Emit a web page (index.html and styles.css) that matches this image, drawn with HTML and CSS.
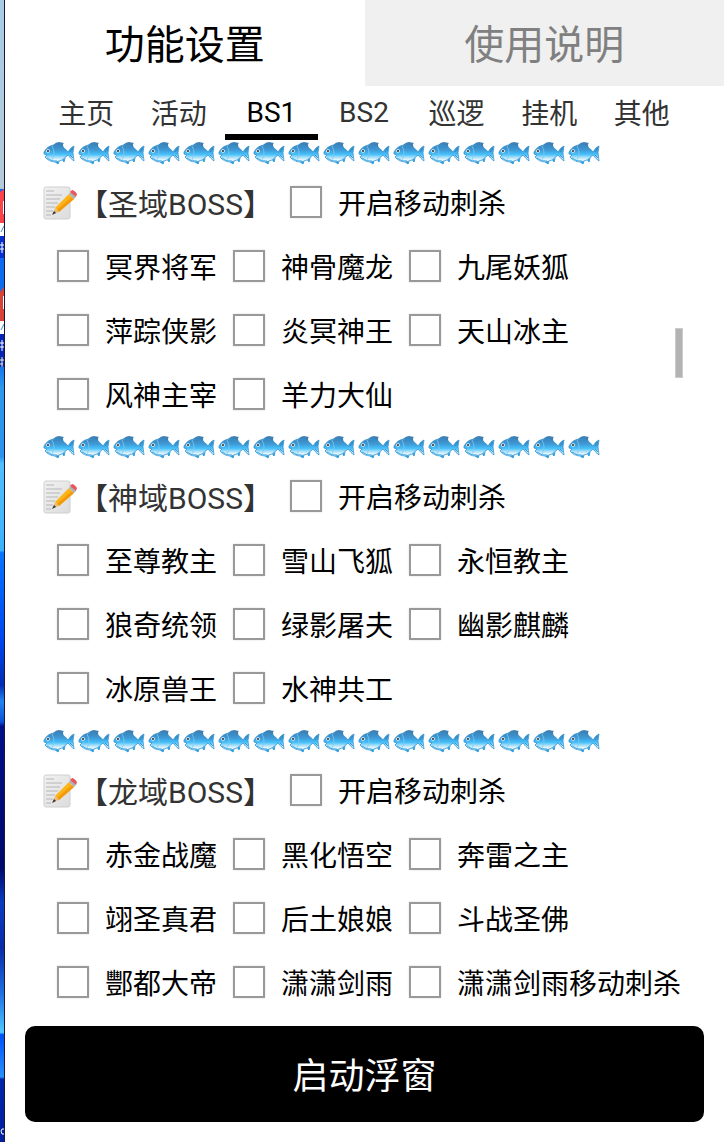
FILE: index.html
```
<!DOCTYPE html>
<html lang="zh-CN">
<head>
    <meta charset="UTF-8">
    <meta name="viewport" content="width=device-width, initial-scale=1.0">
    <title>功能设置</title>
    <link rel="stylesheet" href="styles.css">
</head>
<body>

<!-- shared icons -->
<svg class="defs" width="0" height="0" aria-hidden="true">
    <defs>
        <linearGradient id="fishBody" x1="0" y1="0" x2="0" y2="1">
            <stop offset="0" stop-color="#3b83bb"/>
            <stop offset="0.3" stop-color="#3f9bd6"/>
            <stop offset="0.55" stop-color="#45c0fb"/>
            <stop offset="0.72" stop-color="#a5def9"/>
            <stop offset="0.9" stop-color="#f2fafd"/>
        </linearGradient>
        <linearGradient id="paper" x1="0" y1="0" x2="1" y2="1">
            <stop offset="0" stop-color="#f2f2f2"/>
            <stop offset="1" stop-color="#dcdcdc"/>
        </linearGradient>
        <g id="fish">
            <path d="M10 5 Q13 2 16 2 L21 3 Q19 4 21 8 Z" fill="#3f80b5"/>
            <path d="M11 21 L15 24 L16 21 M19 19 L21 22 L22 18" fill="#2f9fe0" stroke="#2f9fe0"/>
            <path d="M1 12 Q5 5 12 5 Q20 5 25 12 Q28 7 31 6 Q29 12 31 21 Q28 19 25 15 Q20 21 13 22 Q6 22 2 17 L4 15 L1 14 Z" fill="url(#fishBody)" stroke="#3193d0" stroke-width="0.8"/>
            <path d="M9 6 Q13 13 9 20" fill="none" stroke="#7fc6ee" stroke-width="0.8"/>
            <path d="M4 18 Q9 22 14 21" fill="none" stroke="#37a7e8" stroke-width="1"/>
            <path d="M27 12 L30 8 M27 15 L30 18" stroke="#2588c4" stroke-width="0.8"/>
            <circle cx="5" cy="11" r="1.8" fill="#fff"/>
            <circle cx="5" cy="11" r="1" fill="#222"/>
        </g>
        <pattern id="fishRow" width="35" height="26" patternUnits="userSpaceOnUse">
            <use href="#fish"/>
        </pattern>
        <symbol id="memo" viewBox="0 0 35 35">
            <rect x="1" y="2" width="26" height="32" rx="2" fill="url(#paper)" stroke="#cfcfcf"/>
            <path d="M3 6h8M3 10h16M3 14h14M3 18h12M3 22h9M3 26h7M3 30h5" stroke="#b5b5b5" stroke-width="1.2"/>
            <path d="M12 23 L26 9 L31 14 L16 27 Z" fill="#fcb316"/>
            <path d="M14 25 L29 12 L31 14 L16 27 Z" fill="#f29a0c"/>
            <path d="M12 23 L16 27 L10 29 Z" fill="#e6be78"/>
            <path d="M11 26 L13 28 L9 30 Z" fill="#333"/>
            <path d="M26 9 L28 7 L33 12 L31 14 Z" fill="#a9b4ba"/>
            <path d="M27 7 L29 5 Q31 5 34 9 L33 12 Z" fill="#e8555a"/>
        </symbol>
    </defs>
</svg>

<div class="desktop">
    <svg viewBox="0 0 4 1142" preserveAspectRatio="xMinYMin slice" aria-hidden="true">
        <defs>
            <linearGradient id="wall" gradientUnits="userSpaceOnUse" x1="0" y1="0" x2="0" y2="1142">
                <stop offset="0" stop-color="#a8cbe6"/>
                <stop offset="0.165" stop-color="#b6cbd8"/>
                <stop offset="0.166" stop-color="#0a62f5"/>
                <stop offset="0.32" stop-color="#1474e8"/>
                <stop offset="0.34" stop-color="#2f98ea"/>
                <stop offset="0.4" stop-color="#2d92ee"/>
                <stop offset="0.406" stop-color="#52bffd"/>
                <stop offset="0.482" stop-color="#3db2fb"/>
                <stop offset="0.484" stop-color="#0a74ff"/>
                <stop offset="0.56" stop-color="#0048ee"/>
                <stop offset="0.6" stop-color="#002cb4"/>
                <stop offset="0.614" stop-color="#2386ee"/>
                <stop offset="0.632" stop-color="#0a50d8"/>
                <stop offset="0.636" stop-color="#001088"/>
                <stop offset="0.76" stop-color="#00086c"/>
                <stop offset="0.79" stop-color="#0a3cc0"/>
                <stop offset="0.83" stop-color="#0a2ca8"/>
                <stop offset="0.87" stop-color="#1e70e0"/>
                <stop offset="0.904" stop-color="#50c8ff"/>
                <stop offset="0.906" stop-color="#0050f8"/>
                <stop offset="0.943" stop-color="#2a90fa"/>
                <stop offset="0.945" stop-color="#0026a6"/>
                <stop offset="1" stop-color="#0020a0"/>
            </linearGradient>
        </defs>
        <rect width="4" height="1142" fill="url(#wall)"/>
        <path d="M0 192 L4 189 V223 H0 Z" fill="#f94449"/>
        <path d="M3 201h1v13h-1z" fill="#fff"/>
        <rect y="223" width="4" height="13" fill="#fff"/>
        <path d="M1 232 L4 226" stroke="#3a8fc8"/>
        <rect y="236" width="4" height="22" fill="#0830d0"/>
        <!-- desktop icon labels, only their last strokes stick out -->
        <path d="M0 245h4M0 249h4M2 242v11" stroke="#fff"/>
        <path d="M0 292 L4 287 V321 H0 Z" fill="#d84338"/>
        <path d="M3 296h1v13h-1z" fill="#fff"/>
        <rect y="321" width="4" height="13" fill="#fff"/>
        <path d="M1 330 L4 324" stroke="#3a8fc8"/>
        <rect y="334" width="4" height="33" fill="#0624b0"/>
        <path d="M0 343h4M0 347h4M2 340v11" stroke="#fff"/>
        <path d="M0 360h4M0 364h3M2 357v10" stroke="#e8f0c8"/>
        <path d="M4 1129 H2 L1 1131 L2 1134 H4" fill="none" stroke="#fff"/>
    </svg>
</div>

<main class="app">
    <nav class="main-tabs">
        <button type="button" class="active">功能设置</button>
        <button type="button">使用说明</button>
    </nav>

    <nav class="sub-tabs">
        <button type="button">主页</button>
        <button type="button">活动</button>
        <button type="button" class="active">BS1</button>
        <button type="button">BS2</button>
        <button type="button">巡逻</button>
        <button type="button">挂机</button>
        <button type="button">其他</button>
    </nav>

    <div class="boss-list">
        <section class="boss-group">
            <svg class="divider" aria-hidden="true"><rect width="560" height="26" fill="url(#fishRow)"/></svg>
            <div class="group-head">
                <h2><svg class="memo" aria-hidden="true"><use href="#memo"/></svg>【圣域BOSS】</h2>
                <label><input type="checkbox">开启移动刺杀</label>
            </div>
            <div class="options">
                <label><input type="checkbox">冥界将军</label>
                <label><input type="checkbox">神骨魔龙</label>
                <label><input type="checkbox">九尾妖狐</label>
                <label><input type="checkbox">萍踪侠影</label>
                <label><input type="checkbox">炎冥神王</label>
                <label><input type="checkbox">天山冰主</label>
                <label><input type="checkbox">风神主宰</label>
                <label><input type="checkbox">羊力大仙</label>
            </div>
        </section>

        <section class="boss-group">
            <svg class="divider" aria-hidden="true"><rect width="560" height="26" fill="url(#fishRow)"/></svg>
            <div class="group-head">
                <h2><svg class="memo" aria-hidden="true"><use href="#memo"/></svg>【神域BOSS】</h2>
                <label><input type="checkbox">开启移动刺杀</label>
            </div>
            <div class="options">
                <label><input type="checkbox">至尊教主</label>
                <label><input type="checkbox">雪山飞狐</label>
                <label><input type="checkbox">永恒教主</label>
                <label><input type="checkbox">狼奇统领</label>
                <label><input type="checkbox">绿影屠夫</label>
                <label><input type="checkbox">幽影麒麟</label>
                <label><input type="checkbox">冰原兽王</label>
                <label><input type="checkbox">水神共工</label>
            </div>
        </section>

        <section class="boss-group">
            <svg class="divider" aria-hidden="true"><rect width="560" height="26" fill="url(#fishRow)"/></svg>
            <div class="group-head">
                <h2><svg class="memo" aria-hidden="true"><use href="#memo"/></svg>【龙域BOSS】</h2>
                <label><input type="checkbox">开启移动刺杀</label>
            </div>
            <div class="options">
                <label><input type="checkbox">赤金战魔</label>
                <label><input type="checkbox">黑化悟空</label>
                <label><input type="checkbox">奔雷之主</label>
                <label><input type="checkbox">翊圣真君</label>
                <label><input type="checkbox">后土娘娘</label>
                <label><input type="checkbox">斗战圣佛</label>
                <label><input type="checkbox">酆都大帝</label>
                <label><input type="checkbox">潇潇剑雨</label>
                <label><input type="checkbox">潇潇剑雨移动刺杀</label>
            </div>
        </section>

        <div class="scroll-thumb"></div>
    </div>

    <button type="button" class="start">启动浮窗</button>
</main>

</body>
</html>
```
FILE: styles.css
```
* {
    box-sizing: border-box;
}
body {
    margin: 0;
    min-height: 100vh;
    display: flex;
    background-color: #fff;
    color: #000;
    font-family: Roboto, "Noto Sans CJK SC", sans-serif;
    font-size: 28px;
}
button {
    border: none;
    padding: 0 0 2px;
    background: none;
    font-family: inherit;
    cursor: pointer;
}
.defs {
    position: absolute;
}

/* strip of desktop left of the window */
.desktop {
    flex: none;
    width: 5px;
    overflow: hidden;
    border-right: 1px solid #17173c;
}
.desktop svg {
    display: block;
    width: 4px;
    height: 100%;
}

.app {
    flex: 1;
    min-width: 0;
    display: flex;
    flex-direction: column;
}
.main-tabs {
    display: flex;
}
.main-tabs button {
    flex: 1;
    height: 86px;
    font-size: 40px;
    color: #808080;
    background-color: #f0f0f0;
}
.main-tabs .active {
    color: #000;
    background-color: #fff;
}
.sub-tabs {
    display: flex;
    padding: 0 36px 0 35px;
}
.sub-tabs button {
    flex: 1;
    height: 54px;
    padding: 4px 0 0;
    border-bottom: 6px solid transparent;
    font-size: 28px;
    color: #333;
}
.sub-tabs .active {
    color: #000;
    border-bottom-color: #000;
}

.boss-list {
    position: relative;
    flex: 1;
    padding-left: 38px;
}
.boss-group + .boss-group {
    padding-top: 8px;
}
.divider {
    display: block;
    width: 560px;
    height: 30px;
}
.group-head {
    display: flex;
    align-items: center;
    gap: 17px;
    height: 64px;
}
.group-head h2 {
    display: flex;
    align-items: center;
    margin: 0;
    font-size: 30px;
    font-weight: 400;
    color: #333;
}
.memo {
    width: 35px;
    height: 35px;
}
.options {
    display: grid;
    grid-template-columns: repeat(3, max-content);
    grid-auto-rows: 64px;
    column-gap: 16px;
    padding-left: 14px;
}
label {
    display: flex;
    align-items: center;
    gap: 16px;
    white-space: nowrap;
}
input[type="checkbox"] {
    appearance: none;
    width: 32px;
    height: 32px;
    margin: 0;
    border: 2px solid #999;
    background-color: #fff;
    box-shadow: 0 0 2px #ddd;
}
input[type="checkbox"]:checked {
    background-color: #999;
}
.scroll-thumb {
    position: absolute;
    top: 188px;
    right: 41px;
    width: 8px;
    height: 50px;
    border: 1px solid #ccc;
    background-color: #b3b3b3;
}

.start {
    height: 96px;
    margin: 12px 20px 20px;
    border-radius: 10px;
    background-color: #000;
    color: #fff;
    font-size: 36px;
}
```
